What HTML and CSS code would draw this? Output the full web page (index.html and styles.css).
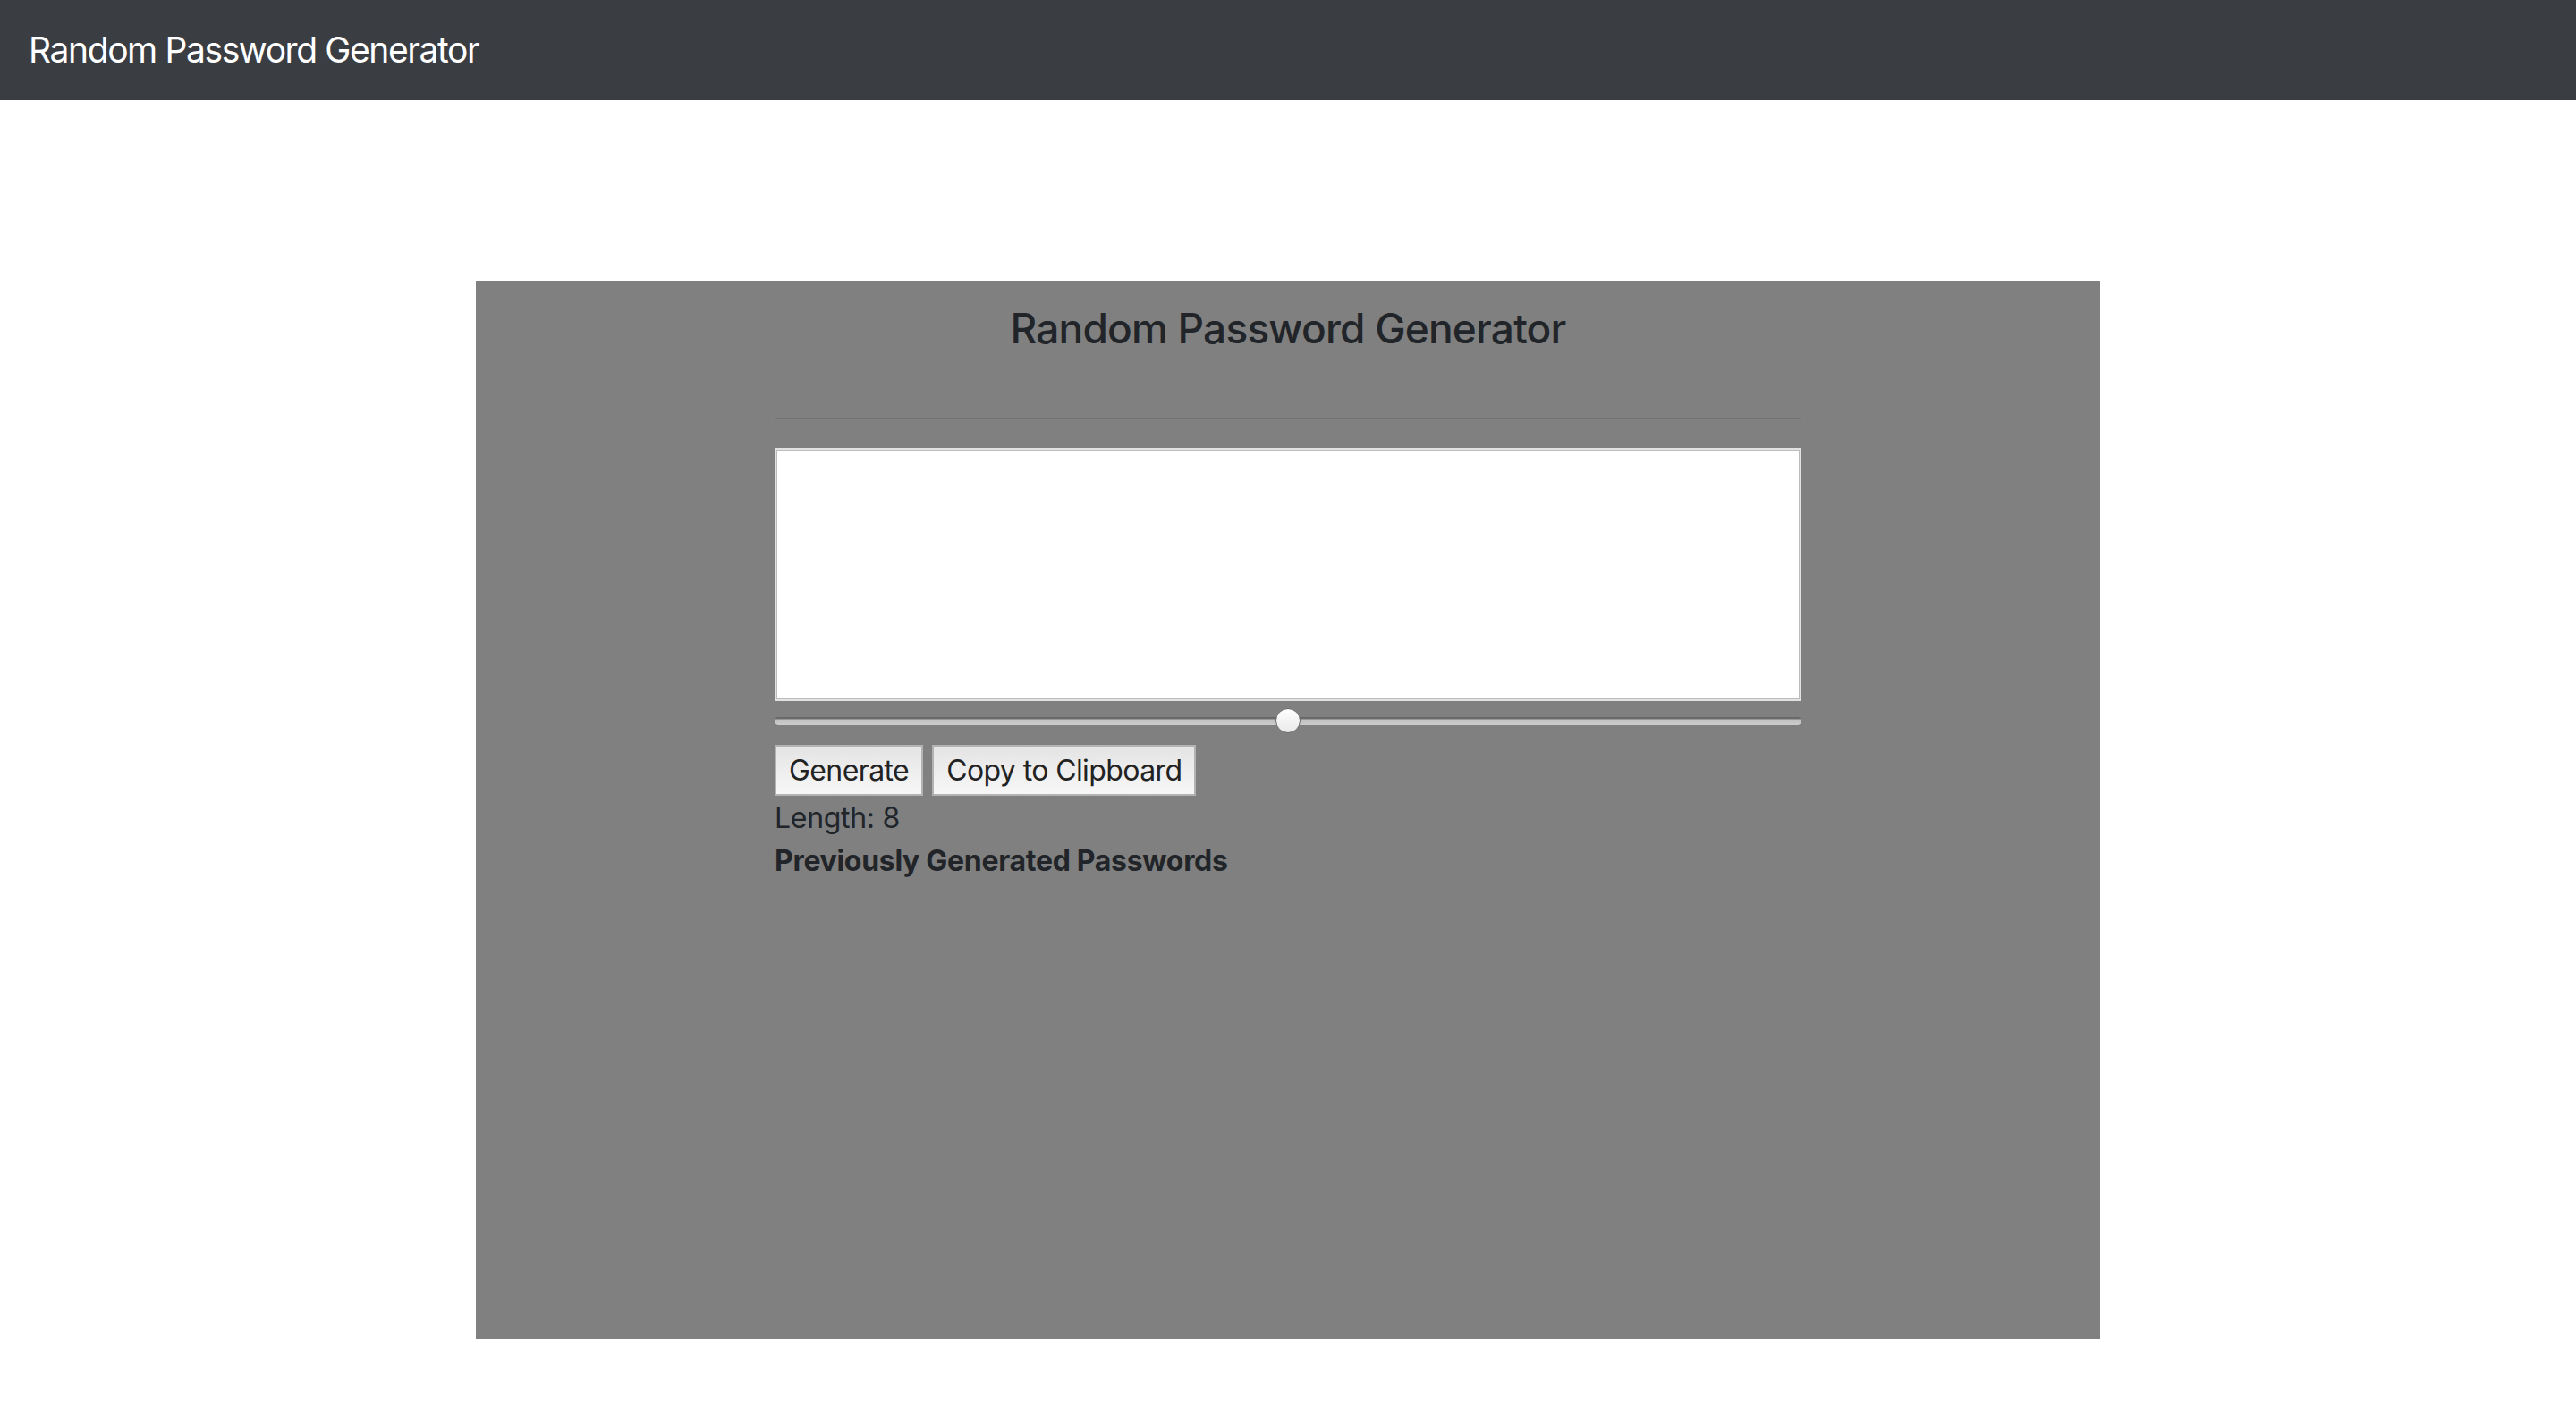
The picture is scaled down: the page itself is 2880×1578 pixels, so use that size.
FILE: index.html
```html
<!DOCTYPE html>
<html lang="en">
<head>
<meta charset="utf-8">
<title>Random Password Generator</title>
<link rel="stylesheet" href="styles.css">
</head>
<body>
<nav class="navbar">
  <span class="brand">Random Password Generator</span>
</nav>
<main class="card">
  <h1 class="card-title">Random Password Generator</h1>
  <div class="inner">
    <hr class="rule">
    <textarea class="output" readonly></textarea>
    <input class="slider" type="range" min="1" max="15" value="8">
    <div class="actions">
      <button class="btn" type="button">Generate</button>
      <button class="btn" type="button">Copy to Clipboard</button>
    </div>
    <div class="length">Length: 8</div>
    <div class="history-title">Previously Generated Passwords</div>
  </div>
</main>
</body>
</html>
```

FILE: styles.css
```css
* { box-sizing: border-box; }

html, body {
  margin: 0;
  padding: 0;
  background: #ffffff;
  font-family: Inter, "Noto Sans", "Liberation Sans", sans-serif;
  color: #212529;
}

.navbar {
  height: 112px;
  background: #3a3d42;
  display: flex;
  align-items: center;
  padding: 0 32px;
}

.brand {
  font-size: 39px;
  line-height: 60px;
  color: #ffffff;
  letter-spacing: -1.4px;
}

.card {
  width: 1816px;
  height: 1184px;
  margin: 202px auto 0;
  background: #808080;
  padding-top: 26px;
}

.card-title {
  margin: 0;
  font-size: 46px;
  line-height: 55px;
  font-weight: 500;
  text-align: center;
  color: #212529;
  letter-spacing: -0.8px;
}

.inner {
  width: 1148px;
  margin: 0 auto;
}

.rule {
  margin: 72px 0 0;
  border: 0;
  border-top: 2px solid rgba(0, 0, 0, 0.1);
  height: 0;
}

.output {
  display: block;
  width: 1148px;
  height: 283px;
  margin: 32px 0 0;
  background: #ffffff;
  border: 2px solid #e2e2e2;
  box-shadow: inset 0 0 0 1px #bcbcbc;
  resize: none;
  outline: none;
}

.slider {
  -webkit-appearance: none;
  appearance: none;
  display: block;
  width: 1148px;
  height: 28px;
  margin: 8px 0 13px;
  padding: 0;
  background: transparent;
}

.slider::-webkit-slider-runnable-track {
  height: 9px;
  border-radius: 5px;
  background: linear-gradient(#666666 0, #6e6e6e 2px, #c2c2c2 3px, #cbcbcb 100%);
}

.slider::-webkit-slider-thumb {
  -webkit-appearance: none;
  appearance: none;
  width: 28px;
  height: 28px;
  margin-top: -9.5px;
  border-radius: 50%;
  border: 1.5px solid #6f6f6f;
  background: linear-gradient(#ffffff, #e9e9e9);
}

.actions {
  display: flex;
  gap: 10px;
}

.btn {
  font-family: inherit;
  font-size: 32px;
  line-height: 39px;
  padding: 7px 14px;
  border: 2px solid #b3b3b3;
  border-radius: 0;
  background: linear-gradient(#e4e4e4, #f7f7f7);
  color: #222222;
  letter-spacing: -0.6px;
}

.length {
  font-size: 32px;
  line-height: 48px;
  margin-top: 1px;
  letter-spacing: -0.3px;
}

.history-title {
  font-size: 32px;
  line-height: 48px;
  font-weight: 700;
  letter-spacing: -0.3px;
}
```
